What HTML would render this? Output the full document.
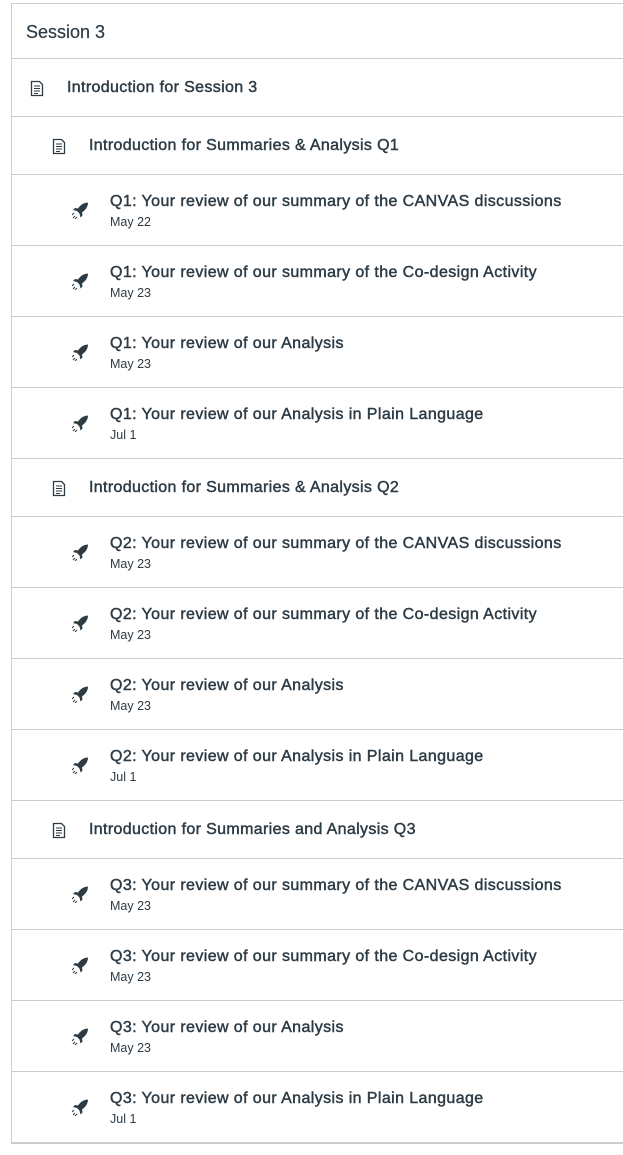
<!DOCTYPE html>
<html><head><meta charset="utf-8"><style>
body{margin:0;background:#fff;font-family:"Liberation Sans",sans-serif;color:#2d3b45;width:623px;height:1155px;overflow:hidden;position:relative}
.box{position:absolute;left:11px;top:3px;width:640px;border:1px solid #c7cdd1;border-right:none}
.row{position:relative;border-bottom:1px solid #c7cdd1;box-sizing:border-box}
.hdr{height:55px;background:#fff;}
.hdr span{position:absolute;left:14px;top:18px;font-size:18px;-webkit-text-stroke:.2px #2d3b45}
.intro{height:58px}
.intro .t{position:absolute;top:20px;font-size:16px;-webkit-text-stroke:.45px #2d3b45;white-space:nowrap;letter-spacing:.35px}
.item{height:71px}
.item .t{position:absolute;left:98px;top:18px;font-size:16px;-webkit-text-stroke:.45px #2d3b45;white-space:nowrap;letter-spacing:.4px}
.item .d{position:absolute;left:98px;top:40px;font-size:12.5px;color:#2d3b45}
.ic{position:absolute}
</style></head><body>
<div class="box" id="b"></div>
<script>
var pg='<svg width="14" height="17" viewBox="0 0 14 17"><path d="M1.5 1.5h8l3 3v11h-11z" fill="none" stroke="#2d3b45" stroke-width="1.3"/><path d="M4 6h6M4 8.5h6M4 11h6M4 13.5h4" stroke="#2d3b45" stroke-width="1"/></svg>';
var rk='<svg width="18" height="18" viewBox="0 0 18 18"><path d="M16.5 1.5c-4 .3-7 2.5-9.5 6l-3-.5-2 2 4 1 2.5 2.5 1 4 2-2-.5-3c3.5-2.5 5.7-5.5 6-9.5z" fill="#2d3b45"/><path d="M2 17l2-2M1 14l2-2M4 18l2-2" stroke="#2d3b45" stroke-width="1"/></svg>';
var h='<div class="row hdr"><span>Session 3</span></div>';
function intro(t,x){h+='<div class="row intro"><span class="ic" style="left:'+(x-37)+'px;top:21px">'+pg+'</span><span class="t" style="left:'+x+'px">'+t+'</span></div>';}
function item(t,d){h+='<div class="row item"><span class="ic" style="left:59px;top:26px">'+rk+'</span><span class="t">'+t+'</span><span class="d">'+d+'</span></div>';}
intro('Introduction for Session 3',55);
var qs=[['Q1','Introduction for Summaries &amp; Analysis Q1',['May 22','May 23','May 23','Jul 1']],['Q2','Introduction for Summaries &amp; Analysis Q2',['May 23','May 23','May 23','Jul 1']],['Q3','Introduction for Summaries and Analysis Q3',['May 23','May 23','May 23','Jul 1']]];
qs.forEach(function(q){intro(q[1],77);
item(q[0]+': Your review of our summary of the CANVAS discussions',q[2][0]);
item(q[0]+': Your review of our summary of the Co-design Activity',q[2][1]);
item(q[0]+': Your review of our Analysis',q[2][2]);
item(q[0]+': Your review of our Analysis in Plain Language',q[2][3]);});
document.getElementById('b').innerHTML=h;
</script>
</body></html>
